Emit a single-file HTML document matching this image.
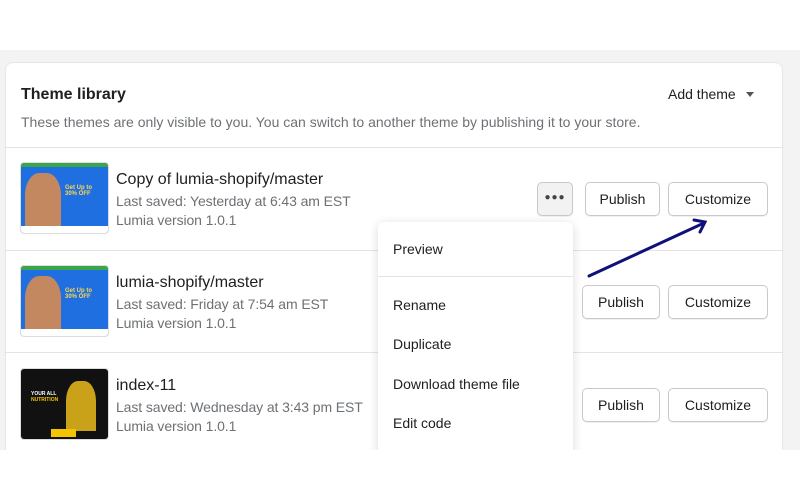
<!DOCTYPE html>
<html><head><style>
*{margin:0;padding:0;box-sizing:border-box}
body{width:800px;height:500px;background:#fff;font-family:"Liberation Sans",sans-serif;position:relative;overflow:hidden}
.bg{position:absolute;left:0;top:50px;width:800px;height:400px;background:#f3f3f3}
.card{position:absolute;left:5px;top:62px;width:778px;height:400px;background:#fff;border-radius:8px;border:1px solid #e6e6e6}
.t{position:absolute;white-space:nowrap}
.hr{position:absolute;left:5px;width:778px;height:1px;background:#e3e3e3}
.btn{position:absolute;height:34px;border:1px solid #c9c9c9;border-radius:5px;background:#fff;font-size:14px;color:#202020;text-align:center;line-height:32px;box-shadow:0 1px 0 rgba(0,0,0,.06)}
.th{position:absolute;left:21px;width:87px;height:70px;border-radius:3px;overflow:hidden;box-shadow:0 0 0 1px #ddd}
.name{font-size:16px;color:#202020;left:116px}
.sub{font-size:14px;color:#6d7175;left:116px;letter-spacing:-0.1px}
.menu{position:absolute;left:378px;top:222px;width:195px;height:240px;background:#fff;border-radius:6px;box-shadow:0 2px 10px rgba(0,0,0,.15)}
.mi{position:absolute;left:15px;font-size:14px;color:#202020}
</style></head><body>
<div class="bg"></div>
<div class="card"></div>
<div class="t" style="left:21px;top:86px;font-size:16px;font-weight:bold;color:#202020">Theme library</div>
<div class="t" style="left:668px;top:86px;font-size:14px;color:#202020">Add theme</div>
<div class="t" style="left:746px;top:92px;width:0;height:0;border-left:4px solid transparent;border-right:4px solid transparent;border-top:5px solid #555"></div>
<div class="t" style="left:21px;top:114px;font-size:14px;color:#6d7175">These themes are only visible to you. You can switch to another theme by publishing it to your store.</div>
<div class="hr" style="top:147px"></div>
<div class="hr" style="top:250px"></div>
<div class="hr" style="top:352px"></div>

<div class="th" style="top:163px;background:#1f6fe0"><div style="height:4px;background:#3aa54a"></div><div style="position:absolute;left:4px;top:10px;width:36px;height:55px;background:#c48860;border-radius:40% 40% 0 0"></div><div style="position:absolute;left:44px;top:22px;font-size:6px;color:#ffd84a;font-weight:bold">Get Up to<br>30% OFF</div><div style="position:absolute;left:0;bottom:0;width:87px;height:7px;background:#fff"></div></div>
<div class="th" style="top:266px;background:#1f6fe0"><div style="height:4px;background:#3aa54a"></div><div style="position:absolute;left:4px;top:10px;width:36px;height:55px;background:#c48860;border-radius:40% 40% 0 0"></div><div style="position:absolute;left:44px;top:22px;font-size:6px;color:#ffd84a;font-weight:bold">Get Up to<br>30% OFF</div><div style="position:absolute;left:0;bottom:0;width:87px;height:7px;background:#fff"></div></div>
<div class="th" style="top:369px;background:#111"><div style="position:absolute;left:45px;top:12px;width:30px;height:50px;background:#c9a21a;border-radius:40% 40% 0 0"></div><div style="position:absolute;left:10px;top:22px;font-size:5px;color:#fff;font-weight:bold">YOUR ALL<br><span style="color:#f3c400">NUTRITION</span></div><div style="position:absolute;left:30px;bottom:2px;width:25px;height:8px;background:#f3c400"></div></div>

<div class="t name" style="top:171px">Copy of lumia-shopify/master</div>
<div class="t sub" style="top:193px">Last saved: Yesterday at 6:43 am EST</div>
<div class="t sub" style="top:212px">Lumia version 1.0.1</div>
<div class="t name" style="top:274px">lumia-shopify/master</div>
<div class="t sub" style="top:296px">Last saved: Friday at 7:54 am EST</div>
<div class="t sub" style="top:315px">Lumia version 1.0.1</div>
<div class="t name" style="top:377px">index-11</div>
<div class="t sub" style="top:399px">Last saved: Wednesday at 3:43 pm EST</div>
<div class="t sub" style="top:418px">Lumia version 1.0.1</div>

<div class="btn" style="left:537px;top:182px;width:36px;background:#f2f2f2;font-size:10px;letter-spacing:1px;line-height:30px;color:#444">●●●</div>
<div class="btn" style="left:585px;top:182px;width:75px">Publish</div>
<div class="btn" style="left:668px;top:182px;width:100px">Customize</div>
<div class="btn" style="left:582px;top:285px;width:78px">Publish</div>
<div class="btn" style="left:668px;top:285px;width:100px">Customize</div>
<div class="btn" style="left:582px;top:388px;width:78px">Publish</div>
<div class="btn" style="left:668px;top:388px;width:100px">Customize</div>

<div class="menu">
<div class="mi" style="top:19px">Preview</div>
<div style="position:absolute;left:0;top:54px;width:195px;height:1px;background:#e3e3e3"></div>
<div class="mi" style="top:75px">Rename</div>
<div class="mi" style="top:114px">Duplicate</div>
<div class="mi" style="top:154px">Download theme file</div>
<div class="mi" style="top:193px">Edit code</div>
</div>
<div style="position:absolute;left:0;top:450px;width:800px;height:50px;background:#fff"></div>

<svg style="position:absolute;left:0;top:0" width="800" height="500"><g stroke="#10107a" stroke-width="3" fill="none" stroke-linecap="round"><line x1="589" y1="276" x2="704" y2="223"/><polyline points="694,220 705,222 700,232"/></g></svg>
</body></html>
